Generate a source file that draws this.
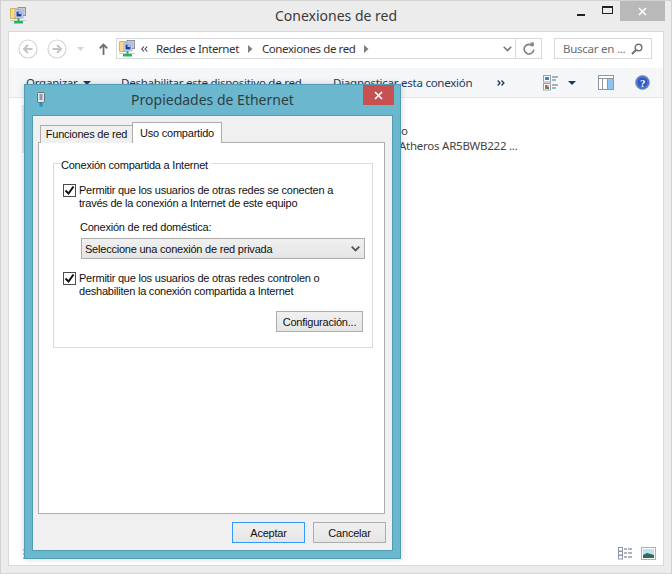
<template>
  <div class="win">
    <header class="titlebar">
      <svg class="appicon" width="16" height="17" viewBox="0 0 16 17">
        <path d="M.5 1.500h6v10h-6z" fill="#f5dc8a" stroke="#d4b65a"/>
        <rect x="8" y=".5" width="7.500" height="8" fill="#c9ccd4" stroke="#8d93a0"/>
        <rect x="5" y="3" width="8" height="8" fill="#dfe6f4" stroke="#7e8fb4" stroke-width=".6"/>
        <rect x="6.500" y="4.500" width="5" height="5" fill="#1f3fa8"/>
        <rect x="8.500" y="4.500" width="3" height="2.500" fill="#9fc3ee"/>
        <rect x="0" y="13" width="16" height="1" fill="#c8cdd0"/>
        <rect x="7.500" y="11" width="2" height="3" fill="#35b04e"/>
        <rect x="4" y="14" width="9" height="2.500" fill="#28b36a"/>
      </svg>
      <div class="wintitle">Conexiones de red</div>
      <div class="caption">
        <span class="capbtn"><i class="minbar"></i></span>
        <span class="capbtn"><i class="maxbox"></i></span>
        <span class="closebtn">
          <svg width="9" height="9" viewBox="0 0 9 9"><path d="M1 1l7 7M8 1L1 8" stroke="#fff" stroke-width="1.6"/></svg>
        </span>
      </div>
    </header>

    <main class="client">
      <div class="navrow">
        <svg class="navround" width="20" height="20" viewBox="0 0 20 20"><circle cx="10" cy="10" r="9" fill="#fff" stroke="#d4d4d4" stroke-width="1.2"/><path d="M14.5 10h-8M10 6l-4 4 4 4" fill="none" stroke="#c4c4c4" stroke-width="2"/></svg>
        <svg class="navround" width="20" height="20" viewBox="0 0 20 20"><circle cx="10" cy="10" r="9" fill="#fff" stroke="#d4d4d4" stroke-width="1.2"/><path d="M5.5 10h8M10 6l4 4-4 4" fill="none" stroke="#c4c4c4" stroke-width="2"/></svg>
        <svg class="navdrop" width="7" height="4" viewBox="0 0 7 4"><path d="M0 0h7L3.500 4z" fill="#d6d6d6"/></svg>
        <svg class="navup" width="9" height="12" viewBox="0 0 9 12"><path d="M4.500 12V1.500M.7 5.300L4.500 1.500l3.800 3.800" fill="none" stroke="#6e6e6e" stroke-width="1.800"/></svg>
        <div class="address">
          <svg class="addricon" width="16" height="17" viewBox="0 0 16 17">
            <path d="M.5 1.500h6v10h-6z" fill="#f5dc8a" stroke="#d4b65a"/>
            <rect x="8" y=".5" width="7.500" height="8" fill="#c9ccd4" stroke="#8d93a0"/>
            <rect x="5" y="3" width="8" height="8" fill="#dfe6f4" stroke="#7e8fb4" stroke-width=".6"/>
            <rect x="6.500" y="4.500" width="5" height="5" fill="#1f3fa8"/>
            <rect x="8.500" y="4.500" width="3" height="2.500" fill="#9fc3ee"/>
            <rect x="0" y="13" width="16" height="1" fill="#c8cdd0"/>
            <rect x="7.500" y="11" width="2" height="3" fill="#35b04e"/>
            <rect x="4" y="14" width="9" height="2.500" fill="#28b36a"/>
          </svg>
          <svg class="crumbs" width="7" height="6" viewBox="0 0 7 6"><path d="M3 .5L.8 3 3 5.500M6.300.5L4 3l2.300 2.500" fill="none" stroke="#444" stroke-width="1.100"/></svg>
          <span class="crumb first">Redes e Internet</span>
          <svg class="sep" width="5" height="8" viewBox="0 0 5 8"><path d="M0 0l4.500 4L0 8z" fill="#7f7f7f"/></svg>
          <span class="crumb">Conexiones de red</span>
          <svg class="sep last" width="5" height="8" viewBox="0 0 5 8"><path d="M0 0l4.500 4L0 8z" fill="#7f7f7f"/></svg>
          <span class="spring"></span>
          <svg class="chev" width="9" height="6" viewBox="0 0 9 6"><path d="M.7.700L4.500 4.500 8.300.7" fill="none" stroke="#7a7a7a" stroke-width="1.600"/></svg>
          <span class="refresh">
            <svg width="12" height="13" viewBox="0 0 12 13"><path d="M9.800 4.200A4.800 4.800 0 1 0 10.800 7.500" fill="none" stroke="#7f7f7f" stroke-width="1.600"/><path d="M6.800 .5h4v4z" fill="#7f7f7f"/></svg>
          </span>
        </div>
        <div class="search">
          <span>Buscar en ...</span>
          <svg width="12" height="12" viewBox="0 0 12 12"><circle cx="7.500" cy="4.500" r="3.300" fill="none" stroke="#6f6f6f" stroke-width="1.400"/><path d="M5 7L1 11" stroke="#6f6f6f" stroke-width="2"/></svg>
        </div>
      </div>

      <div class="toolbar">
        <span class="tool org">Organizar</span>
        <svg class="org-tri" width="8" height="4" viewBox="0 0 8 4"><path d="M0 0h8L4 4z" fill="#1e395b"/></svg>
        <span class="tool dis">Deshabilitar este dispositivo de red</span>
        <span class="tool diag">Diagnosticar esta conexión</span>
        <svg class="more" width="8" height="6" viewBox="0 0 8 6"><path d="M.7.500L3 3 .7 5.500M4.500.5L6.900 3 4.500 5.500" fill="none" stroke="#1e395b" stroke-width="1.300"/></svg>
        <svg class="views" width="16" height="16" viewBox="0 0 16 16">
          <rect x=".5" y=".5" width="7" height="6.500" fill="#fff" stroke="#9aa3ad"/><rect x="2" y="2" width="4" height="3" fill="#3b87c4"/>
          <rect x=".5" y="8.500" width="7" height="6.500" fill="#fff" stroke="#9aa3ad"/><rect x="2" y="10" width="2" height="2" fill="#d64b3a"/><rect x="4" y="10" width="2" height="2" fill="#e3b23c"/><rect x="2" y="12" width="2" height="2" fill="#4fa34f"/><rect x="4" y="12" width="2" height="2" fill="#3b6fc4"/>
          <path d="M9 2h6M9 5h4M9 10h6M9 13h4" stroke="#5f6b78"/>
        </svg>
        <svg class="view-tri" width="8" height="4" viewBox="0 0 8 4"><path d="M0 0h8L4 4z" fill="#1e395b"/></svg>
        <svg class="pane" width="16" height="15" viewBox="0 0 16 15">
          <rect x=".5" y=".5" width="15" height="14" fill="#fff" stroke="#8d97a1"/>
          <path d="M.5 3.500h15M4.500 3.500v11M9.500 3.500v11" stroke="#8d97a1"/>
          <rect x="10" y="4" width="5" height="10" fill="#8cc3f3"/>
        </svg>
        <svg class="help" width="15" height="15" viewBox="0 0 15 15">
          <circle cx="7.500" cy="7.500" r="7" fill="#2f59c4" stroke="#a3abb5"/>
          <circle cx="7.500" cy="7.500" r="5.600" fill="none" stroke="#7f9bdc" stroke-width=".7"/>
          <text x="7.500" y="11.500" text-anchor="middle" font-size="11" font-weight="700" font-family="Liberation Serif" fill="#fff">?</text>
        </svg>
      </div>

      <div class="list">
        <i class="edge"></i>
        <div class="item">
          <div>o</div>
          <div class="atheros">Atheros AR5BWB222 ...</div>
        </div>
        <div class="status">
          <svg class="stray" width="2" height="10" viewBox="0 0 2 10"><path d="M0 1h2M0 5h2M0 9h2" stroke="#9a8a6a"/></svg>
          <svg width="16" height="13" viewBox="0 0 16 13">
            <g fill="#fff" stroke="#8b97a4"><rect x=".5" y=".5" width="4" height="3.500"/><rect x=".5" y="4.500" width="4" height="3.500"/><rect x=".5" y="8.500" width="4" height="3.500"/></g>
            <path d="M6 2h3M10 2h4M6 6h3M10 6h4M6 10h3M10 10h4" stroke="#5f6b78"/>
          </svg>
          <svg width="15" height="13" viewBox="0 0 15 13">
            <rect x=".5" y=".5" width="14" height="12" fill="#fff" stroke="#a4b0bb"/>
            <rect x="2" y="2" width="11" height="9" fill="#bfe0ee"/>
            <path d="M2 8l4-2 7 2v3H2z" fill="#2f6b5c"/>
          </svg>
        </div>
      </div>
    </main>

    <section class="dialog">
      <div class="dlgtitle">
        <svg class="dlgicon" width="10" height="15" viewBox="0 0 10 15">
          <rect x="1.500" y=".5" width="7" height="10" rx="1" fill="#dfe6ea" stroke="#60727e"/>
          <rect x="3.500" y="2" width="3" height="6" fill="#8c9aa4"/>
          <rect x="3.500" y="10.500" width="3" height="4" fill="#1f8fd0"/>
        </svg>
        <span class="dlgname">Propiedades de Ethernet</span>
        <span class="dlgclose">
          <svg width="9" height="9" viewBox="0 0 9 9"><path d="M1 1l7 7M8 1L1 8" stroke="#fff" stroke-width="1.600"/></svg>
        </span>
      </div>

      <div class="dlgbody">
        <div class="tabs">
          <span class="tab">Funciones de red</span>
          <span class="tab active">Uso compartido</span>
        </div>
        <div class="tabpane">
          <fieldset class="group">
            <legend>Conexión compartida a Internet</legend>
            <div class="check">
              <span class="box"><svg width="11" height="11" viewBox="0 0 11 11"><path d="M1.500 5.500l3 3 5-7" fill="none" stroke="#111" stroke-width="2"/></svg></span>
              <span class="checktext">Permitir que los usuarios de otras redes se conecten a<br>través de la conexión a Internet de este equipo</span>
            </div>
            <div class="lbl">Conexión de red doméstica:</div>
            <div class="combo">
              <span>Seleccione una conexión de red privada</span>
              <svg width="9" height="6" viewBox="0 0 9 6"><path d="M.7.700L4.500 4.500 8.300.7" fill="none" stroke="#555" stroke-width="1.800"/></svg>
            </div>
            <div class="check second">
              <span class="box"><svg width="11" height="11" viewBox="0 0 11 11"><path d="M1.500 5.500l3 3 5-7" fill="none" stroke="#111" stroke-width="2"/></svg></span>
              <span class="checktext">Permitir que los usuarios de otras redes controlen o<br>deshabiliten la conexión compartida a Internet</span>
            </div>
            <div class="cfgrow"><button class="btn cfg">Configuración...</button></div>
          </fieldset>
        </div>
        <div class="dlgbuttons">
          <button class="btn primary">Aceptar</button>
          <button class="btn">Cancelar</button>
        </div>
      </div>
    </section>
  </div>
</template>

<style>
html, body { margin: 0; padding: 0; }
</style>

<style scoped>
.win {
  position: relative;
  width: 672px;
  height: 574px;
  box-sizing: border-box;
  display: flex;
  flex-direction: column;
  background: #ececec;
  border: 1px solid #d2d2d2;
  overflow: hidden;
  font-family: "Noto Sans", sans-serif;
  font-size: 11.5px;
  letter-spacing: -0.25px;
  color: #222;
}
.titlebar { height: 30px; flex: none; display: flex; position: relative; }
.appicon { margin: 6px 0 0 9px; }
.wintitle {
  position: absolute; left: 0; right: 0; top: 6px;
  text-align: center; font-size: 14px; letter-spacing: 0; line-height: 18px; color: #3a3a3a;
}
.caption { margin-left: auto; margin-right: 6px; display: flex; align-items: flex-start; }
.capbtn { width: 26px; height: 20px; display: flex; align-items: center; justify-content: center; }
.minbar { display: block; width: 8px; height: 2px; background: #222; margin-top: 7px; }
.maxbox { display: block; width: 9px; height: 5px; border: 1px solid #222; border-top-width: 2px; margin-bottom: 3px; }
.closebtn { width: 45px; height: 20px; background: #b9b9b9; display: flex; align-items: center; justify-content: center; }

.client {
  flex: 1; margin: 0 7px 7px; background: #fff; border: 1px solid #d9d9d9;
  display: flex; flex-direction: column; min-height: 0;
}
.navrow { height: 36px; box-sizing: border-box; padding-bottom: 3px; flex: none; display: flex; align-items: center; }
.navround { margin-left: 9px; }
.navdrop { margin-left: 10px; }
.navup { margin-left: 15px; }
.address {
  margin-left: 8px; width: 426px; height: 21px; box-sizing: border-box; flex: none;
  border: 1px solid #d9d9d9; display: flex; align-items: center; color: #333;
}
.addricon { margin-left: 2px; }
.crumbs { margin-left: 6px; }
.crumb { white-space: nowrap; letter-spacing: -0.4px; }
.crumb.first { margin-left: 8px; }
.sep { margin: 0 9px 0 9px; flex: none; }
.sep.last { margin-right: 0; }
.spring { flex: 1; }
.chev { margin-right: 3px; }
.refresh {
  width: 25px; height: 19px; border-left: 1px solid #d9d9d9;
  display: flex; align-items: center; justify-content: center;
}
.search {
  margin-left: 12px; width: 98px; height: 21px; box-sizing: border-box; flex: none;
  border: 1px solid #d9d9d9; display: flex; align-items: center; justify-content: space-between;
  padding: 0 8px 0 8px; color: #6d6d6d; white-space: nowrap;
}
.toolbar {
  height: 30px; flex: none; background: #f5f6f7;
  border-bottom: 1px solid #e5e5e5; box-sizing: border-box;
  display: flex; align-items: center; color: #1e395b;
}
.tool { white-space: nowrap; flex: none; }
.toolbar svg { flex: none; }
.org { margin-left: 17px; width: 51px; }
.org-tri { margin-left: 6px; }
.dis { margin-left: 30px; width: 181px; }
.diag { margin-left: 31px; width: 141px; }
.more { margin-left: 23px; }
.views { margin-left: 38px; }
.view-tri { margin-left: 9px; }
.pane { margin-left: 22px; }
.help { margin-left: 21px; }
.list { position: relative; flex: 1; display: flex; flex-direction: column; min-height: 0; }
.edge { position: absolute; left: 13px; top: 7px; width: 2px; height: 48px; background: #e8e8e8; }
.item { margin: 25px 0 0 392px; line-height: 15px; color: #444; white-space: nowrap; }
.atheros { margin-left: -2px; }
.status { margin-top: auto; display: flex; justify-content: flex-end; gap: 7px; padding: 0 7px 5px 0; }
.stray { margin: 2px auto 0 14px; }

.dialog {
  position: absolute; left: 23px; top: 83px; width: 377px; height: 475px; box-sizing: border-box;
  background: #6bb7cd; border: 1px solid #4f9cb4; display: flex; flex-direction: column;
  box-shadow: 0 0 6px rgba(0,0,0,.18);
}
.dlgtitle { height: 30px; flex: none; display: flex; position: relative; }
.dlgicon { margin: 7px 0 0 11px; }
.dlgname {
  position: absolute; left: 0; right: 0; top: 6px; text-align: center;
  font-size: 14px; letter-spacing: 0; line-height: 18px; color: #2f3e44;
}
.dlgclose {
  margin-left: auto; margin-right: 6px; width: 31px; height: 20px; background: #c75050;
  display: flex; align-items: center; justify-content: center;
}
.dlgbody {
  flex: 1; margin: 0 7px 7px; background: #f0f0f0; border: 1px solid #4f9cb4;
  padding: 6px 7px 0 5px; display: flex; flex-direction: column; min-height: 0;
  font-family: "Liberation Sans", sans-serif; font-size: 11px; letter-spacing: -0.22px; color: #111;
}
.tabs { display: flex; align-items: flex-end; height: 21px; padding-left: 2px; flex: none; position: relative; z-index: 1; margin-bottom: -1px; }
.tab {
  box-sizing: border-box; height: 18px; width: 93px; text-align: center; line-height: 17px;
  background: #f0f0f0; border: 1px solid #adadad; border-bottom: 0; white-space: nowrap;
}
.tab.active { height: 21px; width: 90px; margin-left: -1px; background: #fff; line-height: 20px; }
.tabpane {
  flex: none; height: 372px; box-sizing: border-box; background: #fff; border: 1px solid #adadad;
  padding: 11px 11px 0 14px;
}
.group {
  margin: 0; box-sizing: border-box; height: 194px; border: 1px solid #dcdcdc; padding: 0 9px; min-width: 0;
}
legend { padding: 4px 3px 0 0; margin-left: -2px; line-height: 14px; }
.check { display: flex; margin-top: 12px; }
.box {
  flex: none; width: 11px; height: 11px; border: 1px solid #4a4a4a; background: #fff; margin: 0 3px 0 0;
  display: flex;
}
.checktext { line-height: 13px; white-space: nowrap; }
.lbl { margin: 10px 0 0 17px; line-height: 14px; }
.combo {
  margin: 4px 0 0 18px; width: 284px; height: 21px; box-sizing: border-box; border: 1px solid #adadad;
  background: linear-gradient(#f0f0f0, #e5e5e5); display: flex; align-items: center; justify-content: space-between;
  padding: 0 4px 0 3px;
}
.second { margin-top: 13px; }
.cfgrow { display: flex; justify-content: flex-end; margin-top: 13px; }
.btn {
  box-sizing: border-box; width: 73px; height: 21px; padding: 0; border: 1px solid #adadad;
  background: linear-gradient(#f0f0f0, #e5e5e5); font: inherit; letter-spacing: inherit; color: #111; line-height: 18px;
}
.btn.cfg { width: 87px; }
.btn.primary { border-color: #3399ff; }
.dlgbuttons { display: flex; justify-content: flex-end; gap: 8px; margin-top: 8px; margin-right: -1px; }
</style>
